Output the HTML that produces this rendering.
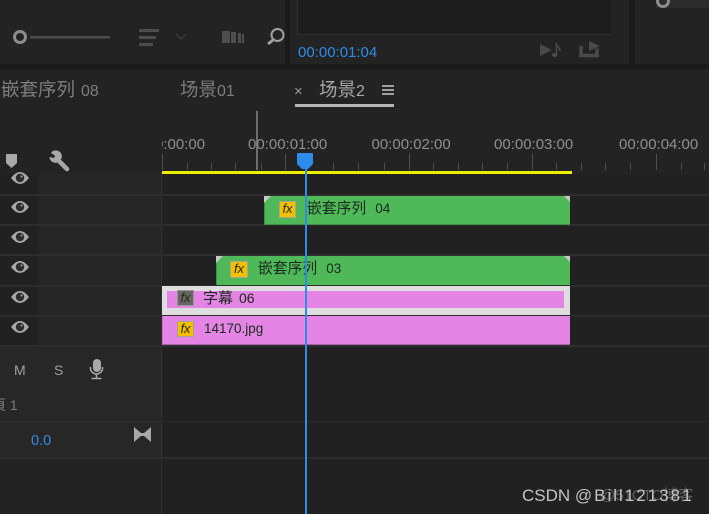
<!DOCTYPE html>
<html><head><meta charset="utf-8"><style>
html,body{margin:0;padding:0;background:#232323}
#r{position:relative;width:709px;height:514px;overflow:hidden;background:#232323;font-family:"Liberation Sans","Noto Sans CJK SC",sans-serif}
#r div,#r span.a,#r svg{position:absolute}
.t{white-space:nowrap;line-height:1}
.tc{color:#8f8f8f;font-size:15px;top:137px}
.ln{left:0;width:709px;height:2px;background:#2d2d2d}
.clip{box-sizing:border-box}
.fx{background:#f2c000;border:1px solid #a5a58c;box-sizing:border-box;color:#2a2a10;font:italic 13px/14px "Liberation Sans",sans-serif;text-align:center}
.lab{color:#1c2a1e;font-size:14.800px;white-space:nowrap;line-height:1}
.lab i{font-style:normal;font-size:13.500px;margin-left:9px}
.tab{font-size:18.500px;color:#7d7d7d;top:81px;white-space:nowrap;line-height:1}
.tab i{font-style:normal;font-size:16px}
</style></head><body><div id="r">
<div style="left:0;top:64px;width:709px;height:5px;background:#1a1a1a"></div>
<div style="left:285px;top:0;width:5px;height:64px;background:#1a1a1a"></div>
<div style="left:629px;top:0;width:6px;height:64px;background:#1a1a1a"></div>
<div style="left:297px;top:0;width:313px;height:34px;background:#1d1d1d;border-left:1px solid #303030;border-bottom:1px solid #303030"></div>
<div style="left:656px;top:0;width:53px;height:8px;background:#2b2b2b"></div>

<svg style="left:0;top:0" width="709" height="69" viewBox="0 0 709 69">
<circle cx="20" cy="37" r="5.500" fill="none" stroke="#8c8c8c" stroke-width="3"/>
<rect x="30" y="36" width="80" height="2.500" fill="#4c4c4c"/>
<rect x="139" y="29" width="20" height="3" fill="#4c4c4c"/><rect x="139" y="36" width="17" height="3" fill="#4c4c4c"/><rect x="139" y="43" width="14" height="3" fill="#4c4c4c"/>
<path d="M176 34l5 5 5-5" fill="none" stroke="#3f3f3f" stroke-width="1.200"/>
<rect x="222" y="31" width="8" height="12" fill="#4e4e4e"/><rect x="231" y="32" width="5" height="11" fill="#4e4e4e"/><rect x="238" y="33" width="3" height="10" fill="#4e4e4e"/><rect x="242" y="34" width="2" height="9" fill="#4e4e4e"/>
<circle cx="277.500" cy="35" r="6" fill="none" stroke="#a0a0a0" stroke-width="2"/><path d="M273 40l-5 4" stroke="#a0a0a0" stroke-width="3"/>
<path d="M540 44l12 6-12 6z" fill="#4a4a4a"/>
<path d="M556 43c0 3 4 4 4 8" fill="none" stroke="#4a4a4a" stroke-width="1.500"/>
<path d="M556.500 43v11" stroke="#4a4a4a" stroke-width="1.500"/>
<ellipse cx="554.500" cy="55" rx="2.800" ry="2" fill="#4a4a4a"/>
<path d="M581 46v9.500h16v-7" fill="none" stroke="#4a4a4a" stroke-width="3.500"/>
<path d="M589 41l11 5-11 5z" fill="#4a4a4a"/>
<circle cx="663" cy="1" r="5.500" fill="none" stroke="#8c8c8c" stroke-width="3"/>
</svg>
<div class="t" style="left:298px;top:45px;color:#2d8ceb;font-size:15px">00:00:01:04</div>

<div class="t tab" style="left:1px">嵌套序列<i style="margin-left:6px">08</i></div>
<div class="t tab" style="left:180px">场景<i>01</i></div>
<div class="t" style="left:294px;top:84px;color:#9a9a9a;font-size:15px">×</div>
<div class="t tab" style="left:319px;color:#a8a8a8">场景<i>2</i></div>
<div style="left:382px;top:85px;width:12px;height:2px;background:#a0a0a0"></div>
<div style="left:382px;top:89px;width:12px;height:2px;background:#a0a0a0"></div>
<div style="left:382px;top:93px;width:12px;height:2px;background:#a0a0a0"></div>
<div style="left:295px;top:104px;width:99px;height:3px;background:#b4b4b4"></div>

<div style="left:256px;top:111px;width:2px;height:59px;background:#6e6e6e"></div>
<div style="left:162px;top:134px;width:547px;height:18px;overflow:hidden">
<span class="a t" style="position:absolute;left:-7px;top:3px;color:#8f8f8f;font-size:15px">0:00:00</span>
</div>
<div class="t tc" style="left:248px">00:00:01:00</div>
<div class="t tc" style="left:371.500px">00:00:02:00</div>
<div class="t tc" style="left:494px">00:00:03:00</div>
<div class="t tc" style="left:619px">00:00:04:00</div>
<svg style="left:162px;top:150px" width="547" height="24" viewBox="162 150 547 24">
<path d="M162.500 154v16M187.500 163v7M211.500 163v7M235.500 163v7M261.500 163v7M285.500 154v16M333.500 163v7M358.500 163v7M384.500 163v7M409.500 154v16M433.500 163v7M458.500 163v7M482.500 163v7M507.500 163v7M532.500 154v16M556.500 163v7M581.500 163v7M605.500 163v7M630.500 163v7M656.500 154v16M681.500 163v7M704.500 163v7" stroke="#4f4f4f" stroke-width="1" fill="none"/>
</svg>
<div style="left:162px;top:171px;width:410px;height:3px;background:#eeee00"></div>

<div style="left:161px;top:172px;width:1px;height:342px;background:#303030"></div>
<div style="left:0;top:174px;width:39px;height:20px;background:#212121"></div>
<div style="left:39px;top:174px;width:122px;height:20px;background:#262626"></div>
<div style="left:0;top:196px;width:39px;height:28px;background:#212121"></div>
<div style="left:39px;top:196px;width:122px;height:28px;background:#262626"></div>
<div style="left:0;top:226px;width:39px;height:28px;background:#212121"></div>
<div style="left:39px;top:226px;width:122px;height:28px;background:#262626"></div>
<div style="left:0;top:256px;width:39px;height:29px;background:#212121"></div>
<div style="left:39px;top:256px;width:122px;height:29px;background:#262626"></div>
<div style="left:0;top:287px;width:39px;height:28px;background:#212121"></div>
<div style="left:39px;top:287px;width:122px;height:28px;background:#262626"></div>
<div style="left:0;top:317px;width:39px;height:28px;background:#212121"></div>
<div style="left:39px;top:317px;width:122px;height:28px;background:#262626"></div>
<div style="left:0;top:347px;width:161px;height:111px;background:#272727"></div>
<div style="left:162px;top:174px;width:547px;height:340px;background:#212121"></div>

<div class="ln" style="top:194px"></div>
<div class="ln" style="top:224px"></div>
<div class="ln" style="top:254px"></div>
<div class="ln" style="top:285px"></div>
<div class="ln" style="top:315px"></div>
<div class="ln" style="top:345px"></div>
<div class="ln" style="top:421px;height:1px"></div>
<div class="ln" style="top:457px"></div>

<svg style="left:0;top:0" width="162" height="460" viewBox="0 0 162 460">
<path d="M6 154h11v9l-5.500 5-5.500-5z" fill="#a8a8a8"/>
<path d="M57 159l10 10" stroke="#a8a8a8" stroke-width="4.500" stroke-linecap="round"/>
<path d="M57 150.500a5.500 5.500 0 0 0-6 2.500l4 2.500-1 2.500-4.500-1a6 6 0 0 0 8 5.500l4-4a6 6 0 0 0-4.500-8z" fill="#a8a8a8"/>
<g>
<g transform="translate(0,178)"><path d="M11 0q9-12 18 0q-9 12-18 0z" fill="#a8a8a8"/><circle cx="20" r="4.200" fill="#2c2c2c"/><circle cx="21.500" cy="-1.500" r="1" fill="#a8a8a8"/></g>
<g transform="translate(0,207)"><path d="M11 0q9-12 18 0q-9 12-18 0z" fill="#a8a8a8"/><circle cx="20" r="4.200" fill="#2c2c2c"/><circle cx="21.500" cy="-1.500" r="1" fill="#a8a8a8"/></g>
<g transform="translate(0,237)"><path d="M11 0q9-12 18 0q-9 12-18 0z" fill="#a8a8a8"/><circle cx="20" r="4.200" fill="#2c2c2c"/><circle cx="21.500" cy="-1.500" r="1" fill="#a8a8a8"/></g>
<g transform="translate(0,267)"><path d="M11 0q9-12 18 0q-9 12-18 0z" fill="#a8a8a8"/><circle cx="20" r="4.200" fill="#2c2c2c"/><circle cx="21.500" cy="-1.500" r="1" fill="#a8a8a8"/></g>
<g transform="translate(0,297)"><path d="M11 0q9-12 18 0q-9 12-18 0z" fill="#a8a8a8"/><circle cx="20" r="4.200" fill="#2c2c2c"/><circle cx="21.500" cy="-1.500" r="1" fill="#a8a8a8"/></g>
<g transform="translate(0,327)"><path d="M11 0q9-12 18 0q-9 12-18 0z" fill="#a8a8a8"/><circle cx="20" r="4.200" fill="#2c2c2c"/><circle cx="21.500" cy="-1.500" r="1" fill="#a8a8a8"/></g>
</g>
<rect x="93" y="359" width="8" height="13" rx="4" fill="#a8a8a8"/>
<path d="M91 367v2a6 6 0 0 0 6 5 6 6 0 0 0 6-5v-2M97 374v4M92 378.500h10" transform="translate(-0.500,0)" fill="none" stroke="#a8a8a8" stroke-width="1.500"/>
<path d="M134 427L141 433V436L134 442zM151 427L144 433V436L151 442z" fill="#a8a8a8"/>
<rect x="141" y="433" width="3" height="3" fill="#a8a8a8"/>
</svg>
<div class="t" style="left:14px;top:363px;color:#a0a0a0;font-size:14px">M</div>
<div class="t" style="left:54px;top:363px;color:#a0a0a0;font-size:14px">S</div>
<div class="t" style="left:-8px;top:398px;color:#7d7d7d;font-size:14px">頁 1</div>
<div class="t" style="left:31px;top:434px;color:#2d8ceb;font-size:14.500px">0.0</div>

<div class="clip" style="left:264px;top:196px;width:306px;height:29px;background:#4fb858;border-bottom:1px solid #3f8f47;border-left:1px solid #3f8f47"></div>
<div class="clip" style="left:216px;top:256px;width:354px;height:29px;background:#4fb858;border-left:1px solid #3f8f47"></div>
<div class="clip" style="left:162px;top:286px;width:408px;height:29px;background:#dedede"></div>
<div style="left:167px;top:291px;width:397px;height:17px;background:#e484e4"></div>
<div class="clip" style="left:162px;top:316px;width:408px;height:29px;background:#e484e4;border-bottom:1px solid #a860a8;border-left:1px solid #c070c0"></div>
<svg style="left:0;top:190px" width="709" height="90" viewBox="0 190 709 90">
<path d="M264 196h7l-7 7zM216 256h7l-7 7z" fill="#c8c8c8"/>
<path d="M564 196h6v6zM564 256h6v6z" fill="#c8c8c8"/>
</svg>

<div class="fx" style="left:279px;top:201px;width:17px;height:17px">fx</div>
<div class="lab" style="left:307px;top:202px">嵌套序列<i>04</i></div>
<div class="fx" style="left:230px;top:261px;width:18px;height:17px">fx</div>
<div class="lab" style="left:258px;top:262px">嵌套序列<i>03</i></div>
<div class="fx" style="left:177px;top:290px;width:17px;height:16px;line-height:14px;background:#666;border-color:#999">fx</div>
<div class="lab" style="left:203px;top:291px;font-size:15px">字幕<i style="margin-left:6px;font-size:14px">06</i></div>
<div class="fx" style="left:177px;top:321px;width:17px;height:16px;line-height:14px">fx</div>
<div class="lab" style="left:204px;top:322px;font-size:13.500px">14170.jpg</div>

<div style="left:305px;top:168px;width:1.500px;height:346px;background:#2d8ceb"></div>
<svg style="left:297px;top:153px" width="17" height="17" viewBox="0 0 17 17"><path d="M0 1q0-1 1-1h14q1 0 1 1v10l-5 5h-6l-5-5z" fill="#2d8ceb"/></svg>

<div class="t" style="left:600px;top:488px;color:#5e5e5e;font-size:15px">@51CTO博客</div>
<div class="t" style="left:522px;top:487px;color:#c4c4c4;font-size:17px">CSDN <span style="letter-spacing:2px">@Bill121381</span></div>
</div></body></html>
